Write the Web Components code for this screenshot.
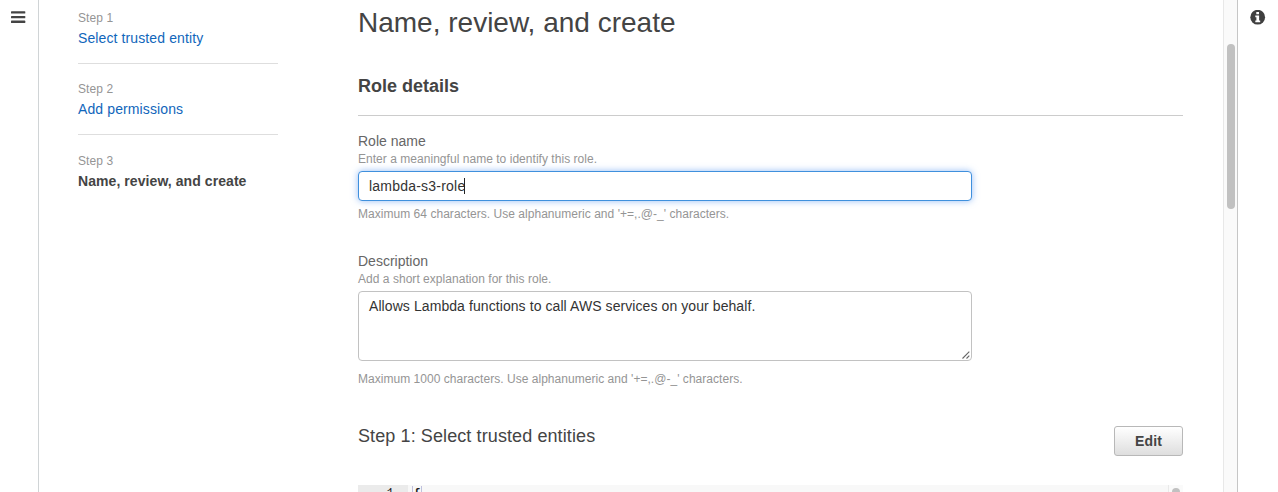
<!DOCTYPE html>
<html lang="en">
<head>
<meta charset="utf-8">
<title>Create role</title>
<style>
html,body{margin:0;height:100%;overflow:hidden;background:#fff}
body{font:14px/20px "Liberation Sans",Arial,sans-serif;color:#444}
</style>
</head>
<body>
<role-console></role-console>
<script>
const define = (name, html) => customElements.define(name, class extends HTMLElement {
  constructor() {
    super();
    const t = document.createElement('template');
    t.innerHTML = html;
    this.attachShadow({ mode: 'open' }).append(t.content.cloneNode(true));
  }
});

define('wizard-step', `
<style>
:host{display:block}
:host(:not([last])){border-bottom:1px solid #dedede;height:54px;margin-bottom:16px}
:host([last]){margin-top:17px}
.n{font-size:12px;line-height:18px;color:#959595;letter-spacing:.1px;height:19px}
.t{font-size:14px;line-height:20px;color:#1166bb;letter-spacing:.11px;white-space:nowrap}
:host([last]) .t{color:#444;font-weight:bold;letter-spacing:.07px}
</style>
<div class="n"><slot name="n"></slot></div><div class="t"><slot></slot></div>`);

define('form-field', `
<style>
:host{display:block;width:614px}
.l{font-size:14px;line-height:20px;height:20px;color:#666}
.h,.c{font-size:12px;line-height:16px;height:16px;color:#959595;white-space:nowrap;letter-spacing:.035px}
.c{margin-top:var(--cgap,5px)}
</style>
<div class="l"><slot name="label"></slot></div><div class="h"><slot name="hint"></slot></div>
<slot></slot><div class="c"><slot name="constraint"></slot></div>`);

define('text-box', `
<style>
:host{display:flex;position:relative;box-sizing:border-box;width:614px;height:30px;margin-top:4px;border:1px solid #bbb;border-radius:4px;padding:4px 10px;background:#fff;color:#333;font-size:14px;line-height:20px;letter-spacing:.22px}
:host([focused]){border-color:#3f90dd;box-shadow:0 0 7px rgba(80,145,240,.6)}
:host([multi]){height:70px;border-color:#c2c2c2;letter-spacing:.08px}
i{display:none;width:1px;height:16px;background:#222;margin:2px 0 0 -1px}
:host([focused]) i{display:block}
svg{display:none;position:absolute;right:0;bottom:0}
:host([multi]) svg{display:block}
</style>
<slot></slot><i></i><svg width="10" height="10" viewBox="0 0 10 10" fill="none" stroke="#666" stroke-width="1.1"><path d="M1.5 8.5L8.3 1.7M5.5 8.5L8.3 5.7"/></svg>`);

define('grey-button', `
<style>
:host{display:block;box-sizing:border-box;width:69px;height:30px;border:1px solid #b8b8b8;border-radius:3px;background:linear-gradient(#fff,#dedede);font-weight:bold;text-align:center;line-height:28px;font-size:14px;color:#444;letter-spacing:.15px}
</style><slot></slot>`);

define('scroll-track', `
<style>
:host{display:block;box-sizing:border-box;width:15px;height:492px;background:#fafafa;border-left:1px solid #e8e8e8;border-right:1px solid #c6c6c6;padding:43.5px 0 0 2.6px}
div{height:165.5px;width:8.6px;border-radius:4.3px;background:#c1c1c1}
</style><div></div>`);

define('code-editor', `
<style>
:host{display:grid;grid-template-columns:50px 1fr 15px;height:7px;overflow:hidden;background:#f8f8f8;font:bold 12px/17px "Liberation Mono",monospace;color:#222}
.g{background:#ebebeb;text-align:right;padding-right:14px;font-weight:normal}
.b{display:block;margin-left:4px;width:8px;height:17px;border:solid #c0c0dd;border-width:0 1px;text-align:center}
.s{border-left:1px solid #e9e9e9;background:#fafafa;padding:3px 0 0 3px}
.s i{display:block;width:8px;height:30px;border-radius:4px;background:#c1c1c1}
.g,.m{padding-top:1px}
</style><div class="g">1</div><div class="m"><span class="b">{</span></div><div class="s"><i></i></div>`);

define('role-console', `
<style>
:host{display:grid;grid-template-columns:39px 1184px 15px 40px;height:492px;overflow:hidden}
nav{box-sizing:border-box;width:39px;border-right:1px solid #d0d4d6;padding:11px 0 0 11px}
svg{display:block}
.page{display:grid;grid-template-columns:200px 825px;column-gap:80px;padding-left:39px}
.steps{padding-top:9px}
main{min-width:0}
h1{margin:0;padding-top:5px;font-size:28px;line-height:36px;font-weight:normal;height:36px;white-space:nowrap}
h2{margin:33px 0 0;height:41px;font-size:18px;line-height:25px;font-weight:bold;border-bottom:1px solid #ccc;white-space:nowrap}
form-field{margin-top:15px}
form-field.d{margin-top:29px}
.row{display:flex;justify-content:space-between;align-items:flex-start;height:30px;margin-top:39px}
h3{margin:-2px 0 0;font-size:18px;line-height:25px;font-weight:normal;letter-spacing:.1px}
code-editor{margin-top:29px}
aside{padding:10px 0 0 12px}
</style>
<nav><svg width="15" height="13" viewBox="0 0 15 13" fill="#444"><rect y=".2" width="14.3" height="2.4" rx=".6"/><rect y="4.9" width="14.3" height="2.4" rx=".6"/><rect y="9.6" width="14.3" height="2.4" rx=".6"/></svg></nav>
<div class="page">
<div class="steps">
<wizard-step><span slot="n">Step 1</span>Select trusted entity</wizard-step>
<wizard-step><span slot="n">Step 2</span>Add permissions</wizard-step>
<wizard-step last><span slot="n">Step 3</span>Name, review, and create</wizard-step>
</div>
<main>
<h1>Name, review, and create</h1>
<h2>Role details</h2>
<form-field><span slot="label">Role name</span><span slot="hint">Enter a meaningful name to identify this role.</span><text-box focused>lambda-s3-role</text-box><span slot="constraint">Maximum 64 characters. Use alphanumeric and '+=,.@-_' characters.</span></form-field>
<form-field class="d" style="--cgap:10px"><span slot="label">Description</span><span slot="hint">Add a short explanation for this role.</span><text-box multi>Allows Lambda functions to call AWS services on your behalf.</text-box><span slot="constraint">Maximum 1000 characters. Use alphanumeric and '+=,.@-_' characters.</span></form-field>
<div class="row"><h3>Step 1: Select trusted entities</h3><grey-button>Edit</grey-button></div>
<code-editor></code-editor>
</main>
</div>
<scroll-track></scroll-track>
<aside><svg width="16" height="15" viewBox="0 0 16 15"><circle cx="7.7" cy="7.2" r="7.4" fill="#3f3f3f"/><path fill="#fff" d="M6.3 1.9h2.7v2.3H6.3zM5.3 5.6h3.8v5h1.1v1.7H5.3v-1.7h1.1V7.2H5.3z"/></svg></aside>`);
</script>
</body>
</html>
